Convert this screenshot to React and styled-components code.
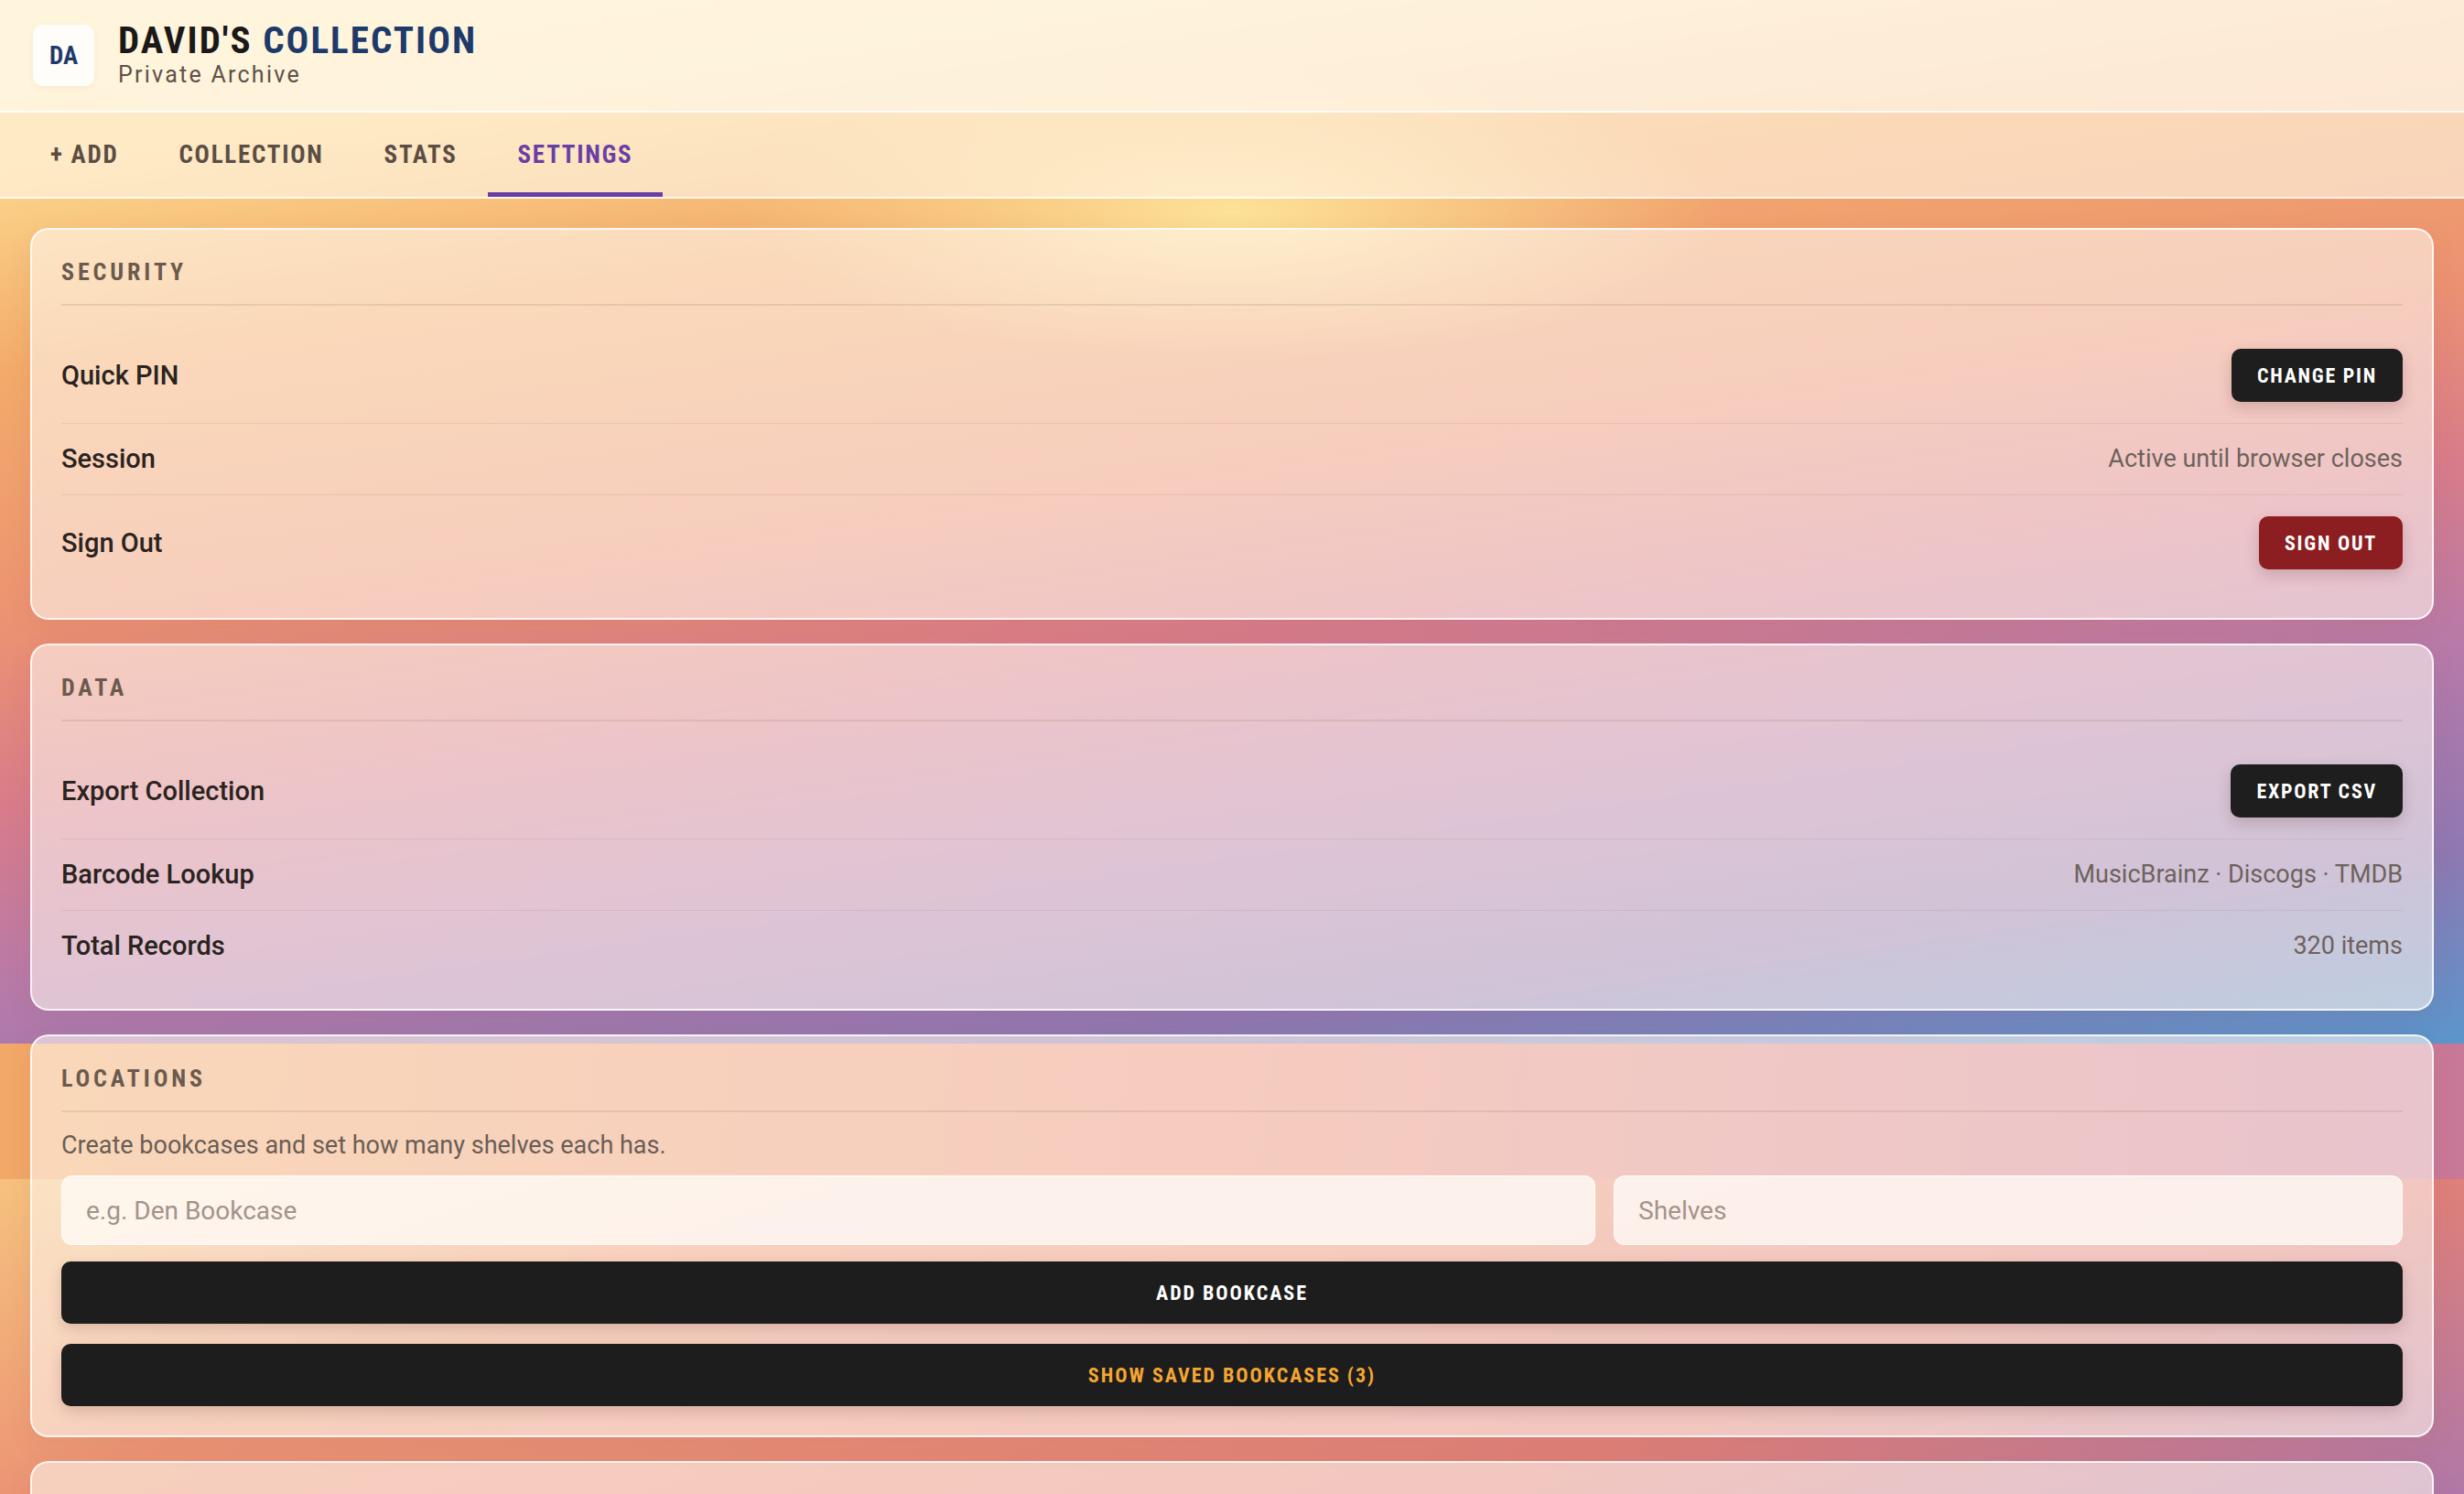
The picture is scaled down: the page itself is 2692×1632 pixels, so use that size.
import React from 'react';
import styled, { createGlobalStyle, css } from 'styled-components';

const GlobalStyle = createGlobalStyle`
  html, body {
    margin: 0;
    padding: 0;
  }
  html {
    scrollbar-width: none;
  }
  html::-webkit-scrollbar {
    display: none;
  }
  body {
    min-height: 100vh;
    font-family: Roboto, "Noto Sans", sans-serif;
    color: #2a2320;
    background-color: #f0a070;
    background-image:
      radial-gradient(540px 160px at 50% 232px, rgba(255, 236, 160, 0.85), rgba(255, 236, 160, 0)),
      linear-gradient(172deg, #fde08f 0%, #fbd38a 13%, #f3aa6a 27%, #ec9272 45%, #d87c8a 58%, #b87aa8 71%, #9078b2 86%, #5a96cc 100%),
      linear-gradient(95deg, #f2a868 0%, #e98c78 50%, #c87898 100%),
      linear-gradient(162deg, #f6c27e 0%, #ec9474 29%, #e08078 71%, #b078a8 100%);
    background-size: 100% 1140px, 100% 1140px, 100% 148px, 100% 344px;
    background-position: 0 0, 0 0, 0 1140px, 0 1288px;
    background-repeat: no-repeat;
  }
`;

// shared look for the narrow all-caps labels
const caps = css`
  font-family: "Roboto Condensed", "Open Sans", sans-serif;
  font-weight: 700;
  text-transform: uppercase;
`;

const Header = styled.header`
  display: flex;
  align-items: center;
  gap: 26px;
  padding: 26px 36px;
  background: rgba(255, 250, 240, 0.8);
  border-bottom: 2px solid rgba(255, 255, 255, 0.8);
`;

const Logo = styled.div`
  width: 67px;
  height: 67px;
  border-radius: 10px;
  background: #fffdf9;
  box-shadow: 0 2px 6px rgba(120, 80, 40, 0.06);
  display: grid;
  place-items: center;
  ${caps};
  font-size: 27px;
  color: #1f3a6b;
`;

const Brand = styled.div`
  display: flex;
  flex-direction: column;
  gap: 7px;
`;

const Title = styled.h1`
  margin: 0;
  ${caps};
  font-size: 41px;
  line-height: 36px;
  letter-spacing: 0.05em;
  color: #1b1918;
`;

const Accent = styled.span`
  color: #1e3a6b;
`;

const Subtitle = styled.div`
  font-size: 25px;
  line-height: 26px;
  letter-spacing: 0.09em;
  color: #5e5048;
`;

const Nav = styled.nav`
  display: flex;
  height: 92px;
  padding: 0 22px;
  background: rgba(255, 247, 232, 0.62);
  border-bottom: 2px solid rgba(255, 255, 255, 0.75);
`;

const Tab = styled.button`
  border: none;
  background: none;
  cursor: pointer;
  padding: 5px 33px 0;
  border-bottom: 5px solid ${(p) => (p.$active ? '#6a3fa5' : 'transparent')};
  ${caps};
  font-size: 27px;
  letter-spacing: 0.065em;
  color: ${(p) => (p.$active ? '#6a3fa5' : '#5c4d44')};
`;

const Main = styled.main`
  display: flex;
  flex-direction: column;
  gap: 26px;
  padding: 32px 33px;
`;

const Card = styled.section`
  background: rgba(255, 249, 243, 0.58);
  border: 2px solid rgba(255, 255, 255, 0.8);
  border-radius: 20px;
  padding: 32px;
  box-shadow: 0 10px 30px rgba(120, 60, 60, 0.08);
`;

const CardTitle = styled.h2`
  margin: 0;
  padding-bottom: 20px;
  border-bottom: 2px solid rgba(130, 90, 70, 0.14);
  ${caps};
  font-size: 26px;
  line-height: 29px;
  letter-spacing: 0.15em;
  color: #6b5a4e;
`;

const Rows = styled.div`
  margin-top: 24px;
`;

const Row = styled.div`
  display: flex;
  align-items: center;
  justify-content: space-between;
  padding: 23px 0;
  border-bottom: 1px solid rgba(130, 90, 70, 0.12);

  &:last-child {
    border-bottom: none;
    padding-bottom: 21px;
  }
`;

const Label = styled.span`
  font-size: 29px;
  font-weight: 500;
  line-height: 31px;
  color: #2a2320;
`;

const Value = styled.span`
  font-size: 27px;
  line-height: 31px;
  color: #6e625c;
`;

const ActionButton = styled.button`
  height: 58px;
  padding: 0 28px;
  border: none;
  border-radius: 10px;
  cursor: pointer;
  background: ${(p) => (p.$danger ? '#8c1d20' : '#1e1e1e')};
  color: #fff;
  ${caps};
  font-size: 22px;
  letter-spacing: 0.08em;
  box-shadow: 0 6px 16px rgba(60, 20, 20, 0.18);
`;

const Desc = styled.p`
  margin: 21px 0 18px;
  font-size: 27px;
  line-height: 30px;
  color: #6a5d56;
`;

const Fields = styled.div`
  display: grid;
  grid-template-columns: 1fr 862px;
  gap: 20px;
`;

const Input = styled.input`
  box-sizing: border-box;
  height: 76px;
  padding: 0 26px;
  border: 1.5px solid rgba(255, 255, 255, 0.8);
  border-radius: 12px;
  background: rgba(255, 251, 247, 0.78);
  font-family: Roboto, "Noto Sans", sans-serif;
  font-size: 28px;
  color: #2a2320;
  outline: none;

  &::placeholder {
    color: #a3938a;
  }
`;

const WideButton = styled.button`
  display: block;
  width: 100%;
  height: 68px;
  margin-top: ${(p) => p.$gap}px;
  border: none;
  border-radius: 10px;
  cursor: pointer;
  background: #1d1d1d;
  color: ${(p) => p.$color};
  ${caps};
  font-size: 22px;
  letter-spacing: 0.09em;
  box-shadow: 0 6px 16px rgba(60, 20, 20, 0.16);
`;

const tabs = ['+ Add', 'Collection', 'Stats', 'Settings'];

const App = () => {
  return (
    <>
      <GlobalStyle />
      <Header>
        <Logo>DA</Logo>
        <Brand>
          <Title>
            David's <Accent>Collection</Accent>
          </Title>
          <Subtitle>Private Archive</Subtitle>
        </Brand>
      </Header>
      <Nav>
        {tabs.map((t) => (
          <Tab key={t} $active={t === 'Settings'}>{t}</Tab>
        ))}
      </Nav>
      <Main>
        <Card>
          <CardTitle>Security</CardTitle>
          <Rows>
            <Row>
              <Label>Quick PIN</Label>
              <ActionButton>Change PIN</ActionButton>
            </Row>
            <Row>
              <Label>Session</Label>
              <Value>Active until browser closes</Value>
            </Row>
            <Row>
              <Label>Sign Out</Label>
              <ActionButton $danger>Sign Out</ActionButton>
            </Row>
          </Rows>
        </Card>
        <Card>
          <CardTitle>Data</CardTitle>
          <Rows>
            <Row>
              <Label>Export Collection</Label>
              <ActionButton>Export CSV</ActionButton>
            </Row>
            <Row>
              <Label>Barcode Lookup</Label>
              <Value>MusicBrainz · Discogs · TMDB</Value>
            </Row>
            <Row>
              <Label>Total Records</Label>
              <Value>320 items</Value>
            </Row>
          </Rows>
        </Card>
        <Card>
          <CardTitle>Locations</CardTitle>
          <Desc>Create bookcases and set how many shelves each has.</Desc>
          <Fields>
            <Input placeholder="e.g. Den Bookcase" />
            <Input placeholder="Shelves" type="number" />
          </Fields>
          <WideButton $gap={18} $color="#ffffff">Add Bookcase</WideButton>
          <WideButton $gap={22} $color="#f5a631">Show Saved Bookcases (3)</WideButton>
        </Card>
        <Card>
          <CardTitle>About</CardTitle>
          <Rows>
            <Row>
              <Label>Version</Label>
              <Value>1.0</Value>
            </Row>
          </Rows>
        </Card>
      </Main>
    </>
  );
};

export default App;
